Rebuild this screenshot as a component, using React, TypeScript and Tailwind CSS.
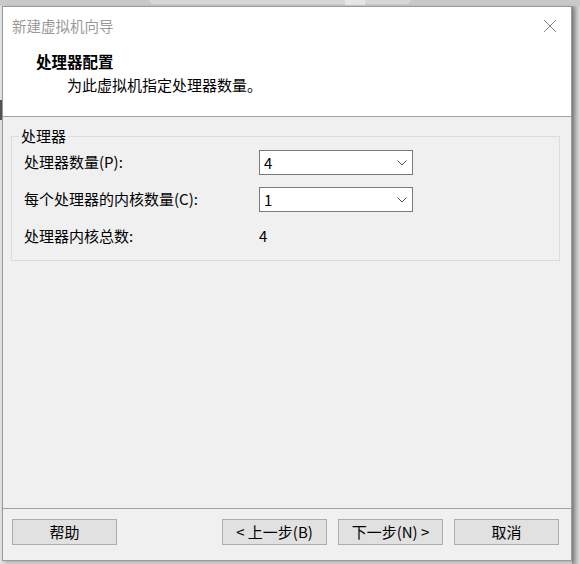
import React from "react";

const font = { fontFamily: '"Microsoft YaHei", "Noto Sans CJK SC", "Noto Sans", sans-serif' };

function Chevron() {
  return (
    <svg width="10" height="6" viewBox="0 0 10 6" className="block">
      <path d="M0.5 0.5 L5 5 L9.5 0.5" fill="none" stroke="#555" strokeWidth="1" />
    </svg>
  );
}

function Select({ value }: { value: string }) {
  return (
    <div className="w-[154px] h-[25px] border border-[#7a7a7a] bg-white flex items-center justify-between pl-[4px] pr-[5px]">
      <span className="text-[15px] leading-none text-black">{value}</span>
      <Chevron />
    </div>
  );
}

function Btn({ children }: { children: React.ReactNode }) {
  return (
    <div className="w-[105px] h-[26px] border border-[#adadad] bg-[#e1e1e1] flex items-center justify-center text-[15px] text-black">
      {children}
    </div>
  );
}

export default function App() {
  return (
    <div className="w-[580px] h-[564px] bg-[#e4e4e4] relative overflow-hidden" style={font}>
      <div className="absolute top-0 left-0 w-[580px] h-[6px] bg-[#c9c9c9]">
        <div className="absolute top-0 left-[150px] w-[260px] h-[4px] bg-[#d8d8d8] rounded-b" />
        <div className="absolute top-0 left-[345px] w-[20px] h-[5px] bg-[#e6e6e6]" />
      </div>
      <div className="absolute top-[6px] right-0 w-[8px] h-[558px] bg-gradient-to-r from-[#9c9c9c] to-[#dcdcdc]" />
      <div className="absolute top-[100px] left-0 w-[2px] h-[20px] bg-[#555]" />

      <div className="absolute left-[2px] top-[6px] w-[570px] h-[555px] border border-[#9a9a9a] bg-white flex flex-col shadow-[2px_2px_4px_rgba(0,0,0,0.25)]">
        <div className="h-[38px] flex items-center justify-between pl-[9px] pr-[14px]">
          <span className="text-[14.5px] text-[#9a9a9a]">新建虚拟机向导</span>
          <svg width="14" height="14" viewBox="0 0 14 14">
            <path d="M1 1 L13 13 M13 1 L1 13" stroke="#8c8c8c" strokeWidth="1" />
          </svg>
        </div>
        <div className="h-[72px] border-b border-[#a0a0a0] pl-[33px] pt-[6px]">
          <div className="text-[15.5px] font-bold leading-[20px] text-black">处理器配置</div>
          <div className="text-[15px] leading-[20px] mt-[4px] pl-[31px] text-black">为此虚拟机指定处理器数量。</div>
        </div>
        <div className="flex-1 bg-[#f0f0f0] pt-[19px] pl-[8px] pr-[11px]">
          <div className="relative h-[125px] border border-[#dcdcdc] pl-[12px] pt-[13px] flex flex-col gap-[12px]">
            <span className="absolute -top-[11px] left-[7px] px-[2px] bg-[#f0f0f0] text-[15px] leading-[20px] text-black">处理器</span>
            <div className="h-[25px] flex items-center">
              <span className="w-[235px] text-[15px] text-black">处理器数量(P):</span>
              <Select value="4" />
            </div>
            <div className="h-[25px] flex items-center">
              <span className="w-[235px] text-[15px] text-black">每个处理器的内核数量(C):</span>
              <Select value="1" />
            </div>
            <div className="h-[25px] flex items-center">
              <span className="w-[235px] text-[15px] text-black">处理器内核总数:</span>
              <span className="text-[15px] text-black">4</span>
            </div>
          </div>
        </div>
        <div className="h-[52px] bg-[#f0f0f0] border-t border-[#a0a0a0] pt-[10px] pl-[9px] pr-[12px] flex">
          <Btn>帮助</Btn>
          <div className="flex-1" />
          <div className="flex gap-[11px]">
            <Btn>&lt; 上一步(B)</Btn>
            <Btn>下一步(N) &gt;</Btn>
            <Btn>取消</Btn>
          </div>
        </div>
      </div>
    </div>
  );
}
